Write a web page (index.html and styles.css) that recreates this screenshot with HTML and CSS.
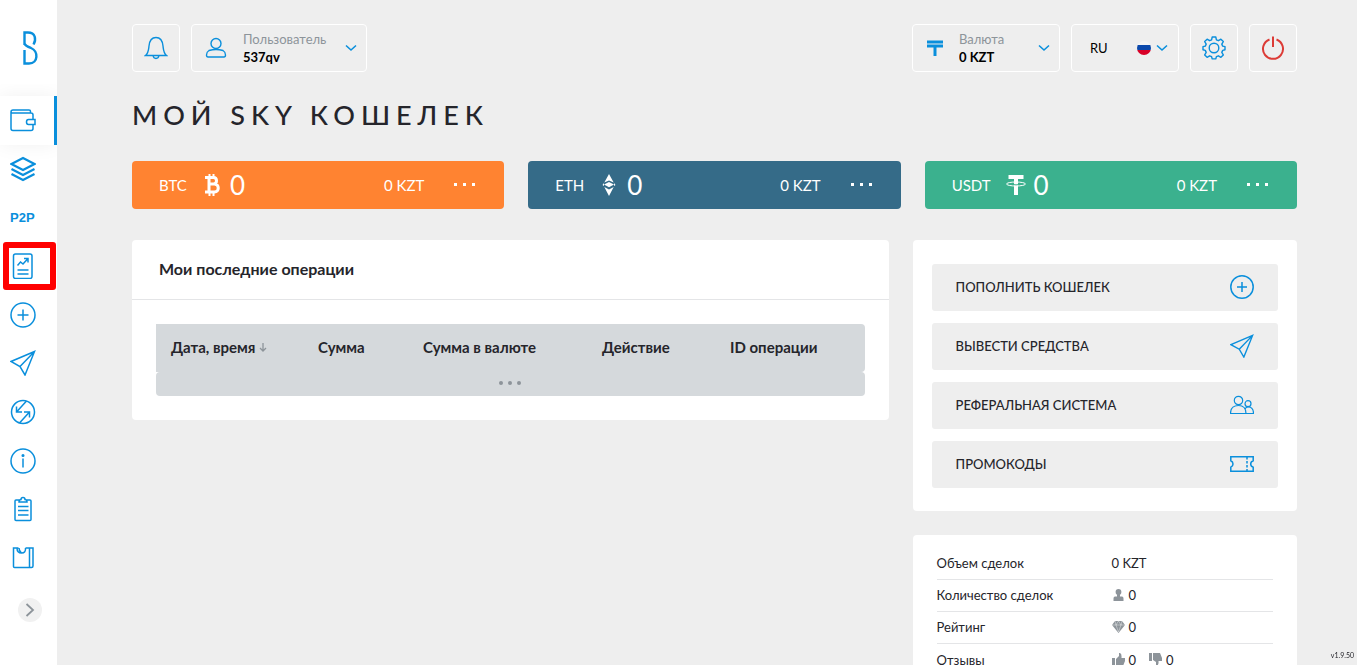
FILE: index.html
```html
<!DOCTYPE html>
<html lang="ru">
<head>
    <meta charset="UTF-8">
    <meta name="viewport" content="width=device-width, initial-scale=1.0">
    <title>Мой Sky кошелек</title>
    <link rel="stylesheet" href="styles.css">
</head>
<body>
    <aside class="sidebar">
        <a href="#" class="logo" aria-label="Главная">
            <svg width="15" height="34" viewBox="0 0 15 34" fill="none" stroke="#0a8fdc" stroke-width="2.4"><path d="M1.500 14V1.500H5c7.500 0 8.500 7 5.500 12M1.500 19v13.500H6c9.500 0 9.500-12.500 2-15.500-3.500-1.300-5.500-2-6.500-4.500"/></svg>
        </a>
        <nav class="menu">
            <a href="#" class="menu-item active" aria-label="Кошелек">
                <svg width="26" height="26" viewBox="0 0 26 26"><path d="M20.500 5.500V4.500Q20.500 3 19 3H3Q1 3 1 5v16.500q0 2 2 2h18q2 0 2-2v-3.500M1 5Q1 6 3 6h18q2 0 2 2v4.500M18.500 12.500H25v5h-6.500q-2 0-2-2.500t2-2.500z"/></svg>
            </a>
            <a href="#" class="menu-item" aria-label="Слои">
                <svg class="bold" width="26" height="26" viewBox="0 0 26 26"><path d="M13 2l11.500 6L13 14 1.500 8zM1.500 13L13 19l11.500-6M1.500 18L13 24l11.500-6"/></svg>
            </a>
            <a href="#" class="menu-item p2p">P2P</a>
            <a href="#" class="menu-item marked" aria-label="Отчеты">
                <svg width="26" height="26" viewBox="0 0 26 26"><rect x="3.500" y="1" width="18.500" height="24.500" rx="2"/><path d="M7.500 12.500l3-3.500 2.500 2 5-5.500M14 5.500h4v4M7.500 17h11M7.500 21h11"/></svg>
            </a>
            <a href="#" class="menu-item" aria-label="Пополнить">
                <svg width="26" height="26" viewBox="0 0 26 26"><circle cx="13" cy="13" r="12"/><path d="M13 7.500v11M7.500 13h11"/></svg>
            </a>
            <a href="#" class="menu-item" aria-label="Вывести">
                <svg width="26" height="26" viewBox="0 0 26 26"><path d="M24.500 1.500L1 11.500l9 5 5 8.500zM24.500 1.500L10 16.500"/></svg>
            </a>
            <a href="#" class="menu-item" aria-label="Обмен">
                <svg width="26" height="26" viewBox="0 0 26 26"><circle cx="13" cy="13" r="11.500"/><path d="M16.500 2L6.500 13M6.500 7.500V13H12M9.500 24l10-11M14 13h5.500v5.500"/></svg>
            </a>
            <a href="#" class="menu-item" aria-label="Информация">
                <svg width="26" height="26" viewBox="0 0 26 26"><circle cx="13" cy="13" r="12"/><path d="M13 10.500v9"/><circle cx="13" cy="7.500" r=".8"/></svg>
            </a>
            <a href="#" class="menu-item" aria-label="Задания">
                <svg width="26" height="26" viewBox="0 0 26 26"><path d="M9 4H6Q5 4 5 5v18.500q0 1 1 1h14q1 0 1-1V5q0-1-1-1h-3M9 6q0-2.500 2-2.500 0-2 2-2t2 2q2 0 2 2.500zM8 10.500h10.500M8 14.500h10.500M8 19h10.500"/></svg>
            </a>
            <a href="#" class="menu-item" aria-label="Магазин">
                <svg width="26" height="26" viewBox="0 0 26 26"><path d="M8.500 3H3.500v18.500q0 1 1 1h17q1.500 0 1.500-1.500V3h-7.500M19.500 3v19.500M7 3q0 5 4.500 5t4-5M9 3q0 3 2.500 5"/></svg>
            </a>
        </nav>
        <button type="button" class="expand" aria-label="Развернуть">
            <svg width="10" height="14" viewBox="0 0 10 14" fill="none" stroke="#8d949a" stroke-width="1.8"><path d="M1.500 1L8 7l-6.500 6"/></svg>
        </button>
    </aside>

    <main class="content">
        <header class="topbar">
            <button type="button" class="box square" aria-label="Уведомления">
                <svg width="24" height="24" viewBox="0 0 24 24"><path d="M1.500 19.500C4.500 17 4.500 14 5 10c.500-5.500 2.500-8.500 7-8.500s6.500 3 7 8.500c.500 4 .500 7 3.500 9.500zM9 19.500q.500 3 3 3t3-3"/></svg>
            </button>
            <button type="button" class="box user">
                <svg width="22" height="24" viewBox="0 0 22 24"><circle cx="11" cy="7.500" r="5"/><path d="M4 14.500q7-2 14 0 2.500 1.500 2.500 4.500 0 2-1.500 2H3q-1.500 0-1.500-2 0-3 2.500-4.500z"/></svg>
                <span class="box-text"><span class="caption">Пользователь</span><span class="value">537qv</span></span>
                <svg class="chevron" width="12" height="8" viewBox="0 0 12 8"><path d="M1 1.500l5 4.500 5-4.500"/></svg>
            </button>

            <div class="box currency">
                <svg class="tenge" width="16" height="16" viewBox="0 0 16 16"><path d="M0 2h16M0 6h16M8 6v10"/></svg>
                <div class="box-text">
                    <label class="caption" for="currency">Валюта</label>
                    <select class="value" id="currency"><option>0 KZT</option></select>
                </div>
                <svg class="chevron" width="12" height="8" viewBox="0 0 12 8"><path d="M1 1.500l5 4.500 5-4.500"/></svg>
            </div>
            <div class="box lang">
                <select aria-label="Язык"><option>RU</option><option>EN</option></select>
                <span class="flag"></span>
                <svg class="chevron" width="12" height="8" viewBox="0 0 12 8"><path d="M1 1.500l5 4.500 5-4.500"/></svg>
            </div>
            <button type="button" class="box square" aria-label="Настройки">
                <svg width="24" height="24" viewBox="0 0 24 24"><circle cx="12" cy="12" r="4.800"/><path d="M10.200 1h3.600l.6 2.800 2 .9 2.500-1.500 2.400 2.400-1.500 2.500.9 2 2.300.5v3.200l-2.300.6-.9 2 1.500 2.500-2.400 2.400-2.500-1.500-2 .9-.6 2.200h-3.600l-.6-2.200-2-.9-2.500 1.500-2.400-2.400 1.500-2.500-.9-2L1 13.800v-3.200l2.300-.5.9-2-1.500-2.500 2.400-2.400 2.500 1.500 2-.9z" stroke-linejoin="round"/></svg>
            </button>
            <button type="button" class="box square exit" aria-label="Выйти">
                <svg width="24" height="24" viewBox="0 0 24 24"><path d="M8.500 3.500a10 10 0 1 0 7 0M12 .5v10.500"/></svg>
            </button>
        </header>

        <h1>МОЙ SKY КОШЕЛЕК</h1>

        <section class="coins">
            <div class="coin btc">
                <span class="coin-name">BTC</span>
                <svg width="20" height="22" viewBox="0 0 16 22" fill="none" stroke="#fff" stroke-width="3"><path d="M1 3.500h8.500c4 0 4 6.500 0 6.500H5h5.500c5 0 5 8 0 8H1M5 3.500V18"/><path d="M5.500 0v3M9.500 0v3M5.500 18.500V22M9.500 18.500V22" stroke-width="2"/></svg>
                <span class="amount">0</span>
                <span class="fiat">0 KZT</span>
                <button type="button" class="more" aria-label="Меню BTC"><i></i><i></i><i></i></button>
            </div>
            <div class="coin eth">
                <span class="coin-name">ETH</span>
                <svg width="20" height="22" viewBox="0 0 13 22" fill="#fff"><path d="M6.500 0l4.700 8.500L6.500 6.500 1.800 8.500zM6.500 8l5 2.500-5 2.800-5-2.800zM1.800 13l4.700 2.500 4.700-2.500-4.700 9z"/><path d="M1.500 9L0 11l1.500 1M11.500 9l1.500 2-1.500 1"/></svg>
                <span class="amount">0</span>
                <span class="fiat">0 KZT</span>
                <button type="button" class="more" aria-label="Меню ETH"><i></i><i></i><i></i></button>
            </div>
            <div class="coin usdt">
                <span class="coin-name">USDT</span>
                <svg width="20" height="20" viewBox="0 0 20 20"><path d="M2.500 0h15v4H12v16H8V4H2.500z" fill="#fff"/><ellipse cx="10" cy="9" rx="9.500" ry="2" fill="none" stroke="#fff"/><path d="M7 9.500q3 .8 6 0" fill="none" stroke="#3bb18e"/></svg>
                <span class="amount">0</span>
                <span class="fiat">0 KZT</span>
                <button type="button" class="more" aria-label="Меню USDT"><i></i><i></i><i></i></button>
            </div>
        </section>

        <div class="columns">
            <section class="panel operations">
                <h2>Мои последние операции</h2>
                <div class="panel-body">
                    <table class="data-table">
                        <thead>
                            <tr>
                                <th class="col-date">Дата, время <svg width="8" height="10" viewBox="0 0 8 10" fill="none" stroke="#8d949a" stroke-width="1.3"><path d="M4 0v8M1 5l3 3 3-3"/></svg></th>
                                <th class="col-sum">Сумма</th>
                                <th class="col-value">Сумма в валюте</th>
                                <th class="col-action">Действие</th>
                                <th>ID операции</th>
                            </tr>
                        </thead>
                    </table>
                    <div class="loader"><i></i><i></i><i></i></div>
                </div>
            </section>

            <div class="side">
                <section class="panel actions">
                    <a href="#" class="action">ПОПОЛНИТЬ КОШЕЛЕК
                        <svg width="24" height="24" viewBox="0 0 24 24"><circle cx="12" cy="12" r="11.200"/><path d="M12 7v10M7 12h10"/></svg>
                    </a>
                    <a href="#" class="action">ВЫВЕСТИ СРЕДСТВА
                        <svg width="24" height="24" viewBox="0 0 26 26"><path d="M24.500 1.500L1 11.500l9 5 5 8.500zM24.500 1.500L10 16.500"/></svg>
                    </a>
                    <a href="#" class="action">РЕФЕРАЛЬНАЯ СИСТЕМА
                        <svg width="24" height="24" viewBox="0 0 24 24" class="thin"><circle cx="8.500" cy="7.500" r="4.200"/><path d="M.5 20.500c0-5 3-8 8-8s7.500 3 7.500 8zM15 16q1-2 3-2c3.500 0 5.500 2.500 5.500 6.500H16"/><circle cx="18" cy="10.700" r="3"/></svg>
                    </a>
                    <a href="#" class="action">ПРОМОКОДЫ
                        <svg width="24" height="24" viewBox="0 0 24 24"><path d="M.8 4.700h22.400v4q-2.500 1-2.500 3.300t2.500 3.300v4H.8v-4Q3 14.300 3 12T.8 8.700z"/><path d="M17 5v14" stroke-dasharray="2.500 1.500"/></svg>
                    </a>
                </section>

                <section class="panel stats">
                    <dl>
                        <div class="stat"><dt>Объем сделок</dt><dd>0 KZT</dd></div>
                        <div class="stat"><dt>Количество сделок</dt><dd>
                            <svg width="13" height="12" viewBox="0 0 13 12"><circle cx="6.500" cy="3" r="2.900"/><path d="M5 5h3v2.500h2q1.500 0 1.500 2V12h-10V9.500q0-2 1.500-2h2z"/></svg>0
                        </dd></div>
                        <div class="stat"><dt>Рейтинг</dt><dd>
                            <svg width="13" height="12" viewBox="0 0 13 12"><path d="M3 0h7l3 4-6.500 8L0 4z"/><path d="M0 4h13M4 4l2.500 7L9 4M3 0l1 4 2.500-4L9 4l1-4" fill="none" stroke="#fff" stroke-width=".4"/></svg>0
                        </dd></div>
                        <div class="stat"><dt>Отзывы</dt><dd>
                            <svg width="13" height="14" viewBox="0 0 13 14"><path d="M0 5h3v8H0zM4 6l3-3V0q3-.5 2.500 5H13v3l-2 5H4z"/></svg>0
                            <svg class="down" width="13" height="14" viewBox="0 0 13 14"><path d="M0 0h3v8H0zM4 0h7l2 5v3H9.500q.5 5-2.500 4.500V9L4 7z"/></svg>0
                        </dd></div>
                    </dl>
                </section>
            </div>
        </div>
    </main>
    <span class="version">v1.9.50</span>
</body>
</html>
```
FILE: styles.css
```css
* {
    box-sizing: border-box;
}
body {
    margin: 0;
    display: flex;
    height: 100vh;
    overflow: hidden;
    background-color: #eee;
    color: #25252b;
    font-family: Lato, "Noto Sans", sans-serif;
    font-size: 14px;
}
button, select {
    font: inherit;
    color: inherit;
    background: none;
    border: 0;
    padding: 0;
}
select {
    appearance: none;
}
a {
    color: inherit;
    text-decoration: none;
}
svg {
    flex: none;
}

/* sidebar */
.sidebar {
    flex: none;
    width: 57px;
    height: 100vh;
    background-color: #fff;
}
.logo {
    display: flex;
    justify-content: center;
    height: 96px;
    padding: 31px 0 0 4px;
}
.menu-item {
    position: relative;
    display: flex;
    align-items: center;
    height: 49px;
    padding: 0 0 2px 10px;
}
.menu-item:nth-child(3n) {
    height: 48px;
}
.menu-item svg {
    fill: none;
    stroke: #0a8fdc;
    stroke-width: 1.5;
}
.menu-item .bold {
    stroke-width: 2.2;
}
.menu-item.active {
    border-right: 3px solid #0a8fdc;
    box-shadow: 0 0 20px rgba(0, 0, 0, 0.06);
    clip-path: inset(-12px 0 -24px 0);
}
.p2p {
    color: #0a8fdc;
    font-family: "Liberation Sans", Arial, sans-serif;
    font-size: 13px;
    font-weight: bold;
}
.marked::after {
    content: "";
    position: absolute;
    inset: 0 1px 1px 3px;
    border: 6px solid #f00;
    border-radius: 3px;
}
.expand {
    display: flex;
    align-items: center;
    justify-content: center;
    width: 24px;
    height: 24px;
    margin: 15px 0 0 18px;
    border-radius: 50%;
    background-color: #f1f1f1;
}

/* top bar */
.content {
    flex: 1;
    min-width: 0;
    height: 100vh;
    overflow-y: auto;
    scrollbar-width: none;
    padding: 24px 60px 24px 75px;
}
.topbar {
    display: flex;
    gap: 11px;
}
.box {
    display: flex;
    align-items: center;
    height: 48px;
    border: 1px solid #fff;
    border-radius: 4px;
    text-align: left;
}
.box svg {
    fill: none;
    stroke: #0a8fdc;
    stroke-width: 1.4;
}
.box .chevron {
    stroke-width: 1.6;
}
.box .tenge {
    stroke-width: 3;
}
.square {
    justify-content: center;
    width: 48px;
}
.user {
    width: 176px;
    padding: 0 9px 0 13px;
}
.currency {
    width: 148px;
    padding: 0 9px 0 14px;
    margin-left: auto;
}
.box-text {
    flex: 1;
    display: flex;
    flex-direction: column;
    padding-left: 16px;
    font-size: 13px;
    line-height: 18px;
}
.caption {
    color: #8d949a;
}
.value {
    color: #000;
    font-weight: bold;
}
.lang {
    width: 108px;
    padding: 0 10px 0 18px;
    gap: 5px;
    color: #000;
    font-size: 13px;
}
.lang select {
    flex: 1;
    min-width: 0;
}
.flag {
    width: 14px;
    height: 14px;
    border-radius: 50%;
    background: linear-gradient(#f4f4f4 30%, #0b48ab 30% 66%, #d80027 66%);
}
.box.exit svg {
    stroke: #dc3b36;
    stroke-width: 2;
}

h1 {
    margin: 26px 0 29px;
    font-size: 27px;
    font-weight: 500;
    line-height: 34px;
    letter-spacing: 6px;
}

/* wallets */
.coins {
    display: grid;
    grid-template-columns: repeat(3, 1fr);
    gap: 24px;
}
.coin {
    display: flex;
    align-items: center;
    height: 48px;
    padding: 0 29px 1px 27px;
    border-radius: 4px;
    color: #fff;
    font-size: 15px;
}
.btc {
    background-color: #ff8331;
}
.eth {
    background-color: #356b88;
}
.usdt {
    background-color: #3bb18e;
}
.coin-name {
    margin-right: 15px;
}
.amount {
    margin-left: 8px;
    font-size: 26px;
}
.fiat {
    margin-left: auto;
}
.more {
    display: flex;
    justify-content: space-between;
    width: 21px;
    margin-left: 30px;
}
.more i {
    width: 3px;
    height: 3px;
    background-color: #fff;
}

/* panels */
.columns {
    display: grid;
    grid-template-columns: minmax(0, 1fr) 33%;
    align-items: start;
    gap: 24px;
    margin-top: 31px;
}
.panel {
    background-color: #fff;
    border-radius: 4px;
}
.operations h2 {
    margin: 0;
    padding: 17px 27px 19px;
    border-bottom: 1px solid #e4e5e7;
    font-size: 16px;
    font-weight: bold;
    line-height: 23px;
}
.panel-body {
    padding: 24px;
}
.data-table {
    width: 100%;
    height: 48px;
    table-layout: fixed;
    border-spacing: 0;
    background-color: #d5d9dc;
    border-radius: 0 4px 4px 0;
}
.data-table th {
    padding: 0 0 2px 15px;
    font-size: 15px;
    font-weight: bold;
    text-align: left;
    white-space: nowrap;
}
.col-date {
    width: 147px;
}
.col-sum {
    width: 105px;
}
.col-value {
    width: 179px;
}
.col-action {
    width: 128px;
}
.loader {
    display: flex;
    align-items: center;
    justify-content: center;
    gap: 5px;
    height: 24px;
    padding-bottom: 2px;
    background-color: #d5d9dc;
    border-radius: 4px;
}
.loader i {
    width: 4px;
    height: 4px;
    border-radius: 50%;
    background-color: #8d949a;
}
.side {
    display: grid;
    gap: 24px;
}
.actions {
    display: grid;
    gap: 12px;
    padding: 24px 19px 23px;
}
.action {
    display: flex;
    align-items: center;
    justify-content: space-between;
    height: 47px;
    padding: 0 24px 2px;
    border-radius: 3px;
    background-color: #eee;
    font-size: 13px;
    font-weight: 500;
}
.action svg {
    fill: none;
    stroke: #0a8fdc;
    stroke-width: 1.5;
}
.action .thin {
    stroke-width: 1.2;
}
.stats {
    padding: 13px 24px;
}
.stats dl {
    margin: 0;
}
.stat {
    display: grid;
    grid-template-columns: 175px 1fr;
    align-items: center;
    height: 32px;
    padding-bottom: 1px;
    border-bottom: 1px solid #e4e5e7;
    font-size: 13px;
}
.stat:last-child {
    border-bottom: 0;
}
.stat dd {
    display: flex;
    align-items: center;
    gap: 4px;
    margin: 0;
}
.stat svg {
    fill: #8d949a;
}
.stat .down {
    margin-left: 9px;
}
.version {
    position: fixed;
    right: 3px;
    bottom: 5px;
    font-size: 7px;
    line-height: 10px;
}
```
